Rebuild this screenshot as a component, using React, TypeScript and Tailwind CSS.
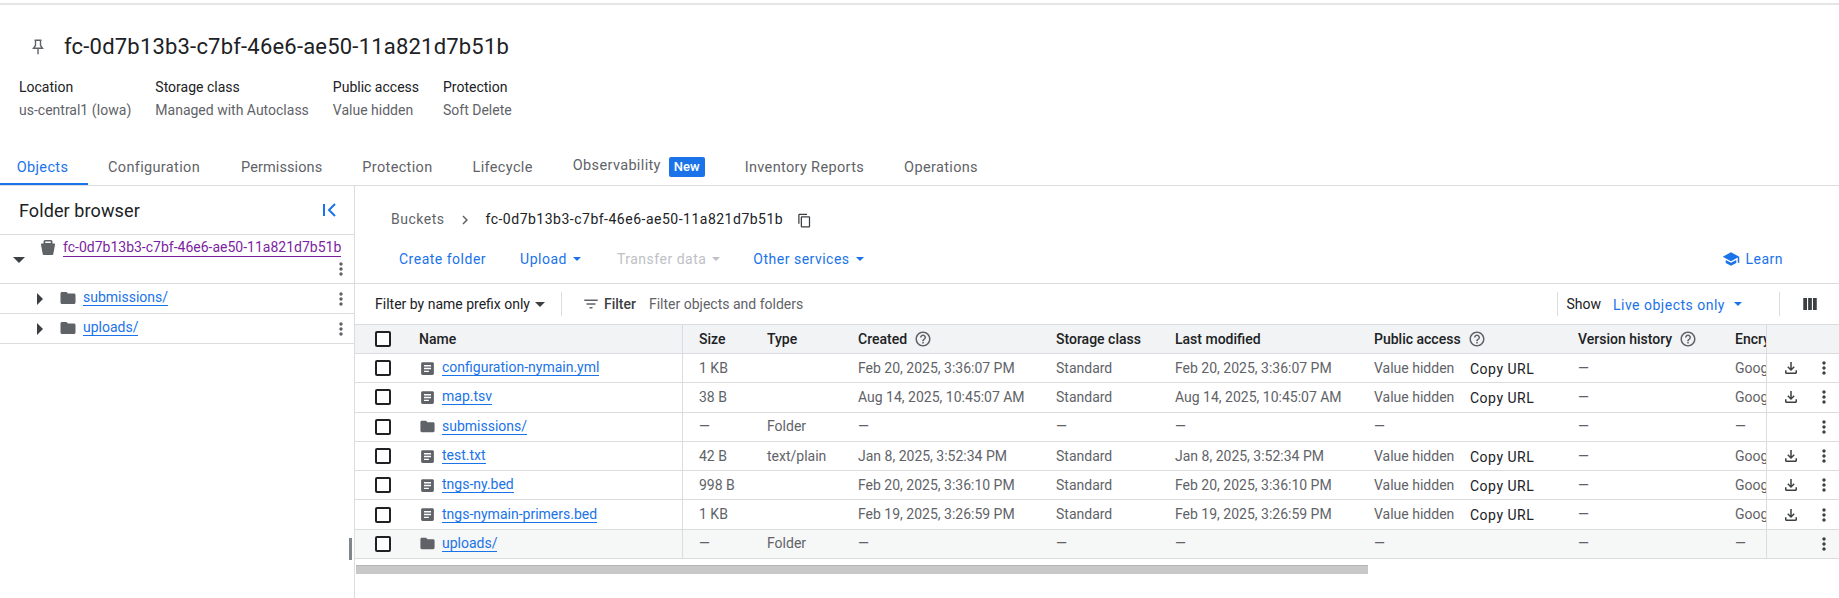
import React from "react";

const GREY = "#5f6368";

function Ic({ d, size = 24, color = "currentColor", className = "" }: { d: string; size?: number; color?: string; className?: string }) {
  return (
    <svg width={size} height={size} viewBox="0 0 24 24" fill={color} className={`shrink-0 ${className}`}>
      <path d={d} />
    </svg>
  );
}

const FOLDER = "M10 4H4c-1.1 0-2 .9-2 2v12c0 1.1.9 2 2 2h16c1.1 0 2-.9 2-2V8c0-1.1-.9-2-2-2h-8l-2-2z";
const DOC = "M19 3H5c-1.1 0-2 .9-2 2v14c0 1.1.9 2 2 2h14c1.1 0 2-.9 2-2V5c0-1.1-.9-2-2-2zM7 7h10v2H7V7zm0 4h10v2H7v-2zm0 4h7v2H7v-2z";
const MORE = "M12 8c1.1 0 2-.9 2-2s-.9-2-2-2-2 .9-2 2 .9 2 2 2zm0 2c-1.1 0-2 .9-2 2s.9 2 2 2 2-.9 2-2-.9-2-2-2zm0 6c-1.1 0-2 .9-2 2s.9 2 2 2 2-.9 2-2-.9-2-2-2z";
const DOWNLOAD = "M18 15v3H6v-3H4v3c0 1.1.9 2 2 2h12c1.1 0 2-.9 2-2v-3h-2zm-1-4l-1.41-1.41L13 12.17V4h-2v8.17L8.41 9.59 7 11l5 5 5-5z";
const COPY = "M16 1H4c-1.1 0-2 .9-2 2v14h2V3h12V1zm3 4H8c-1.1 0-2 .9-2 2v14c0 1.1.9 2 2 2h11c1.1 0 2-.9 2-2V7c0-1.1-.9-2-2-2zm0 16H8V7h11v14z";
const SCHOOL = "M5 13.18v4L12 21l7-3.82v-4L12 17l-7-3.82zM12 3L1 9l11 6 9-4.91V17h2V9L12 3z";
const HELP = "M11 18h2v-2h-2v2zm1-16C6.48 2 2 6.48 2 12s4.48 10 10 10 10-4.48 10-10S17.52 2 12 2zm0 18c-4.41 0-8-3.59-8-8s3.59-8 8-8 8 3.59 8 8-3.59 8-8 8zm0-14c-2.21 0-4 1.79-4 4h2c0-1.1.9-2 2-2s2 .9 2 2c0 2-3 1.75-3 5h2c0-2.25 3-2.5 3-5 0-2.21-1.79-4-4-4z";
const FILTER = "M10 18h4v-2h-4v2zM3 6v2h18V6H3zm3 7h12v-2H6v2z";
const COLS = "M3 4h5v16H3V4zm6.5 0h5v16h-5V4zm6.500 0h5v16h-5V4z";

function Caret({ color = "currentColor", className = "", w = 8 }: { color?: string; className?: string; w?: number }) {
  return (
    <svg width={w} height={w / 2} viewBox="0 0 10 5" fill={color} className={`shrink-0 ${className}`}>
      <path d="M0 0h10L5 5z" />
    </svg>
  );
}

function Tri({ dir }: { dir: "right" | "down" }) {
  return dir === "right" ? (
    <svg width="6" height="12" viewBox="0 0 6 12" fill="#3c4043" className="shrink-0"><path d="M0 0l6 6-6 6z" /></svg>
  ) : (
    <svg width="12" height="6" viewBox="0 0 12 6" fill="#3c4043" className="shrink-0"><path d="M0 0h12L6 6z" /></svg>
  );
}

const Checkbox = () => <div className="w-[16px] h-[16px] rounded-[2px] border-2 border-[#202124] bg-white shrink-0" />;

const Link = ({ children }: { children: React.ReactNode }) => (
  <span className="text-[#1a73e8] border-b border-[#1a73e8] leading-[17px]">{children}</span>
);

type Row = { kind: "file" | "folder"; name: string; size: string; type: string; created: string; modified: string };
const rows: Row[] = [
  { kind: "file", name: "configuration-nymain.yml", size: "1 KB", type: "", created: "Feb 20, 2025, 3:36:07 PM", modified: "Feb 20, 2025, 3:36:07 PM" },
  { kind: "file", name: "map.tsv", size: "38 B", type: "", created: "Aug 14, 2025, 10:45:07 AM", modified: "Aug 14, 2025, 10:45:07 AM" },
  { kind: "folder", name: "submissions/", size: "—", type: "Folder", created: "—", modified: "—" },
  { kind: "file", name: "test.txt", size: "42 B", type: "text/plain", created: "Jan 8, 2025, 3:52:34 PM", modified: "Jan 8, 2025, 3:52:34 PM" },
  { kind: "file", name: "tngs-ny.bed", size: "998 B", type: "", created: "Feb 20, 2025, 3:36:10 PM", modified: "Feb 20, 2025, 3:36:10 PM" },
  { kind: "file", name: "tngs-nymain-primers.bed", size: "1 KB", type: "", created: "Feb 19, 2025, 3:26:59 PM", modified: "Feb 19, 2025, 3:26:59 PM" },
  { kind: "folder", name: "uploads/", size: "—", type: "Folder", created: "—", modified: "—" },
];

const Help = () => <Ic d={HELP} size={18} color={GREY} className="ml-[7px]" />;

function SideRow({ name }: { name: string }) {
  return (
    <div className="h-[30px] flex items-center border-b border-[#dadce0] pl-[37px] pr-[3px]">
      <Tri dir="right" />
      <Ic d={FOLDER} size={18} color={GREY} className="ml-[16px] -mt-[2px]" />
      <span className="ml-[6px] -mt-[4px] text-sm"><Link>{name}</Link></span>
      <div className="flex-1" />
      <Ic d={MORE} size={20} color={GREY} />
    </div>
  );
}

export default function App() {
  return (
    <div className="w-[1839px] h-[598px] overflow-hidden bg-white flex flex-col text-[14px] text-[#202124] font-['Roboto',sans-serif]">
      <div className="h-[5px] border-b-2 border-[#e4e5e7] shrink-0" />
      {/* header */}
      <div className="h-[68px] pt-[16px] shrink-0 flex items-center">
        <svg width="12" height="16" viewBox="0 0 12 16" fill="none" stroke={GREY} strokeWidth="1.4" className="ml-[32px] shrink-0">
          <path d="M2.500 1.200h7M3.500 1.200v5.300L1.500 9.300h9L8.500 6.500V1.200M6 9.300v6" />
        </svg>
        <h1 className="ml-[20px] text-[22px] leading-[28px] tracking-[0.2px] text-[#202124]">fc-0d7b13b3-c7bf-46e6-ae50-11a821d7b51b</h1>
      </div>
      <div className="h-[77px] shrink-0 flex pl-[19px] pt-[6px] gap-[24px]">
        {[
          ["Location", "us-central1 (Iowa)"],
          ["Storage class", "Managed with Autoclass"],
          ["Public access", "Value hidden"],
          ["Protection", "Soft Delete"],
        ].map(([a, b]) => (
          <div key={a} className="flex flex-col gap-[6px]">
            <div className="leading-[17px] text-[#202124]">{a}</div>
            <div className="leading-[17px] text-[#5f6368]">{b}</div>
          </div>
        ))}
      </div>
      {/* tabs */}
      <div className="h-[36px] shrink-0 flex border-b border-[#dadce0] text-[14.5px] text-[#5f6368] tracking-[0.35px]">
        <div className="w-[88px] pr-[3px] text-center text-[#1a73e8] border-b-[2px] border-[#1a73e8] h-[35px] pt-[8px] leading-[20px]">Objects</div>
        <div className="flex pt-[8px] leading-[20px] pl-[20px] gap-[40px]">
          <span>Configuration</span>
          <span className="tracking-[0.1px] ml-[1px]">Permissions</span>
          <span>Protection</span>
          <span>Lifecycle</span>
          <span className="flex items-start gap-[8px] -mt-[2px]">
            Observability
            <span className="bg-[#1a73e8] text-white text-[13px] tracking-normal font-medium rounded-[2px] px-[5px] mt-[1px] h-[20px] leading-[20px]">New</span>
          </span>
          <span>Inventory Reports</span>
          <span>Operations</span>
        </div>
      </div>
      {/* body */}
      <div className="flex-1 flex min-h-0">
        <aside className="w-[355px] shrink-0 border-r border-[#dadce0] flex flex-col">
          <div className="h-[49px] border-b border-[#dadce0] flex items-center justify-between pl-[19px] pr-[16px]">
            <span className="text-[18px] tracking-[0.1px]">Folder browser</span>
            <svg width="16" height="16" viewBox="0 0 16 16" fill="none" stroke="#1a73e8" strokeWidth="2"><path d="M2 2v12M13 2L7 8l6 6" /></svg>
          </div>
          <div className="h-[49px] border-b border-[#dadce0] flex pr-[3px] pl-[13px]">
            <div className="pt-[22px]"><Tri dir="down" /></div>
            <div className="pt-[5px] ml-[16px]">
              <svg width="14" height="15" viewBox="0 0 14 15" fill={GREY} className="shrink-0">
                <path fillRule="evenodd" d="M4 0h6a1.500 1.500 0 0 1 1.500 1.500V3.500H13a1 1 0 0 1 1 1.200L12.300 14a1.200 1.200 0 0 1-1 1H2.700a1.200 1.200 0 0 1-1-1L0 4.700a1 1 0 0 1 1-1.200h1.500V1.500A1.500 1.500 0 0 1 4 0zm.200 1.500v1.600h5.600V1.500H4.200z" />
              </svg>
            </div>
            <div className="ml-[8px] flex-1 flex flex-col items-end">
              <span className="self-start text-[#7b1fa2] border-b border-[#7b1fa2] leading-[17px] mt-[4px]">fc-0d7b13b3-c7bf-46e6-ae50-11a821d7b51b</span>
              <Ic d={MORE} size={20} color={GREY} className="mt-[2px]" />
            </div>
          </div>
          <SideRow name="submissions/" />
          <SideRow name="uploads/" />
          <div className="flex-1 flex justify-end items-end pr-[2px] pb-[38px]">
            <div className="w-[3px] h-[22px] bg-[#80868b]" />
          </div>
        </aside>
        <main className="flex-1 min-w-0 flex flex-col">
          <div className="h-[49px] pt-[18px] shrink-0 flex items-center pl-[36px] tracking-[0.5px]">
            <span className="text-[#5f6368]">Buckets</span>
            <svg width="18" height="18" viewBox="0 0 24 24" fill={GREY} className="ml-[12px]"><path d="M10 6L8.59 7.41 13.17 12l-4.58 4.59L10 18l6-6z" /></svg>
            <span className="ml-[11px]">fc-0d7b13b3-c7bf-46e6-ae50-11a821d7b51b</span>
            <Ic d={COPY} size={15} color="#3c4043" className="ml-[14px] mt-[2px]" />
          </div>
          <div className="h-[49px] shrink-0 flex items-center pl-[44px] pr-[56px] border-b border-[#dadce0] text-[#1a73e8] tracking-[0.5px] text-[14px]">
            <span>Create folder</span>
            <span className="ml-[34px] flex items-center gap-[6px]">Upload <Caret color="#1a73e8" /></span>
            <span className="ml-[36px] flex items-center gap-[6px] text-[#bdc1c6]">Transfer data <Caret color="#bdc1c6" /></span>
            <span className="ml-[33px] flex items-center gap-[6px]">Other services <Caret color="#1a73e8" /></span>
            <div className="flex-1" />
            <Ic d={SCHOOL} size={18} color="#1a73e8" />
            <span className="ml-[5px]">Learn</span>
          </div>
          <div className="h-[41px] shrink-0 flex items-center pl-[20px] border-b border-[#dadce0]">
            <span>Filter by name prefix only</span>
            <Caret w={10} color="#3c4043" className="ml-[5px]" />
            <div className="ml-[16px] w-px h-[24px] bg-[#dadce0]" />
            <Ic d={FILTER} size={18} color={GREY} className="ml-[20px]" />
            <span className="ml-[4px] font-medium text-[#3c4043]">Filter</span>
            <span className="ml-[13px] text-[#5f6368]">Filter objects and folders</span>
            <div className="flex-1" />
            <div className="w-px h-[24px] bg-[#dadce0]" />
            <span className="ml-[8px]">Show</span>
            <span className="ml-[12px] text-[#1a73e8] tracking-[0.5px] mt-[2px]">Live objects only</span>
            <Caret color="#1a73e8" className="ml-[9px]" />
            <div className="ml-[37px] w-px h-[24px] bg-[#dadce0]" />
            <Ic d={COLS} size={18} color="#3c4043" className="ml-[21px] mr-[20px]" />
          </div>
          {/* table */}
          <div className="flex h-[29px] shrink-0 bg-[#f1f3f4] border-b border-[#dadce0] font-medium text-[#202124] items-center">
            <div className="w-[64px] pl-[20px] flex items-center"><Checkbox /></div>
            <div className="w-[264px] border-r border-[#dadce0] h-full flex items-center">Name</div>
            <div className="w-[84px] pl-[16px]">Size</div>
            <div className="w-[91px]">Type</div>
            <div className="w-[198px] flex items-center">Created <Help /></div>
            <div className="w-[119px]">Storage class</div>
            <div className="w-[199px]">Last modified</div>
            <div className="w-[204px] flex items-center">Public access <Help /></div>
            <div className="w-[157px] flex items-center">Version history <Help /></div>
            <div className="w-[31px] overflow-hidden whitespace-nowrap">Encryption</div>
            <div className="flex-1 h-full border-l border-[#dadce0]" />
          </div>
          {rows.map((r, i) => (
            <div key={r.name} className={`flex h-[29.3px] shrink-0 border-b border-[#dadce0] items-center text-[#5f6368] ${i === 6 ? "bg-[#f6f7f7]" : ""}`}>
              <div className="w-[64px] pl-[20px] flex items-center"><Checkbox /></div>
              <div className="w-[264px] border-r border-[#dadce0] h-full flex items-center">
                <Ic d={r.kind === "file" ? DOC : FOLDER} size={17} color={GREY} />
                <span className="ml-[6px] -mt-[1px]"><Link>{r.name}</Link></span>
              </div>
              <div className="w-[84px] pl-[16px]">{r.size}</div>
              <div className="w-[91px]">{r.type}</div>
              <div className="w-[198px]">{r.created}</div>
              <div className="w-[119px]">{r.kind === "file" ? "Standard" : "—"}</div>
              <div className="w-[199px]">{r.modified}</div>
              <div className="w-[96px]">{r.kind === "file" ? "Value hidden" : "—"}</div>
              <div className="w-[108px] text-[#202124] tracking-[0.5px] mt-[2px]">{r.kind === "file" ? "Copy URL" : ""}</div>
              <div className="w-[157px]">—</div>
              <div className="w-[31px] overflow-hidden whitespace-nowrap">{r.kind === "file" ? "Google-managed" : "—"}</div>
              <div className="flex-1 h-full border-l border-[#dadce0] flex items-center pl-[15px]">
                <div className="w-[18px] h-[18px]">{r.kind === "file" && <Ic d={DOWNLOAD} size={18} color="#3c4043" />}</div>
                <Ic d={MORE} size={20} color="#3c4043" className="ml-[14px]" />
              </div>
            </div>
          ))}
          <div className="mt-[6px] ml-[1px] w-[1012px] h-[9px] shrink-0 bg-[#c8c8c8] border-t border-[#b5b5b5]" />
        </main>
      </div>
    </div>
  );
}
